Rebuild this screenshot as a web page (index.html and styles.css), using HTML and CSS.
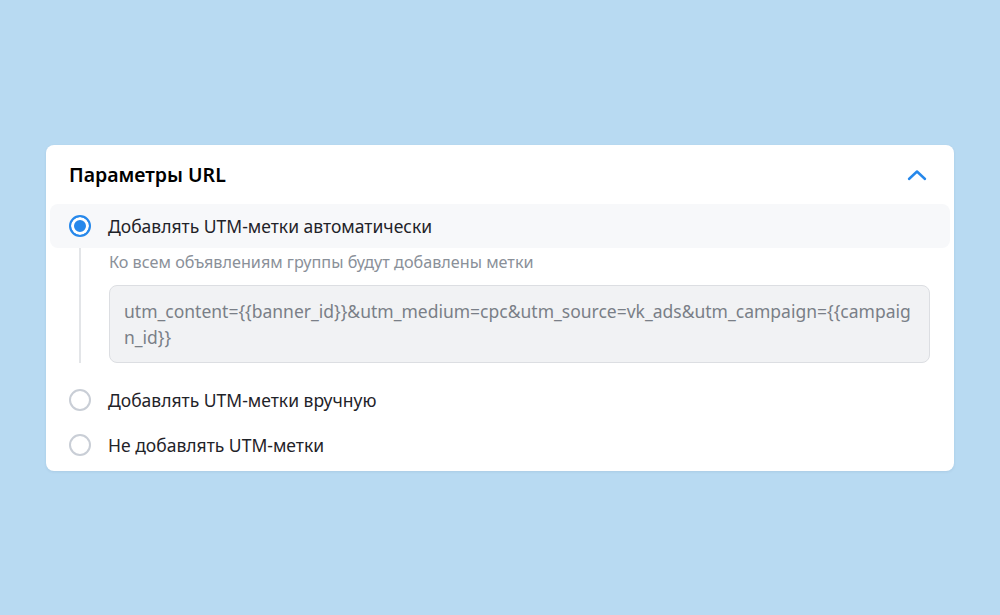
FILE: index.html
```html
<!DOCTYPE html>
<html lang="ru">
<head>
    <meta charset="UTF-8">
    <title>Параметры URL</title>
    <link rel="stylesheet" href="styles.css">
</head>
<body>
    <div class="card">
        <div class="card-head">
            <h2>Параметры URL</h2>
            <svg class="chevron" width="20" height="12" viewBox="0 0 20 12">
                <path d="M2 10 L10 2.5 L18 10" fill="none" stroke="#2688eb" stroke-width="2.4" stroke-linecap="round" stroke-linejoin="round"/>
            </svg>
        </div>
        <div class="options">
            <div class="option active">
                <span class="radio checked"></span>
                <span class="label">Добавлять UTM-метки автоматически</span>
            </div>
            <div class="details">
                <p class="hint">Ко всем объявлениям группы будут добавлены метки</p>
                <div class="utm-box">utm_content={{banner_id}}&amp;utm_medium=cpc&amp;utm_source=vk_ads&amp;utm_campaign={{campaign_id}}</div>
            </div>
            <div class="option">
                <span class="radio"></span>
                <span class="label">Добавлять UTM-метки вручную</span>
            </div>
            <div class="option">
                <span class="radio"></span>
                <span class="label">Не добавлять UTM-метки</span>
            </div>
        </div>
    </div>
</body>
</html>
```

FILE: styles.css
```css
*{
    margin: 0;
    padding: 0;
    box-sizing: border-box;
}

body{
    background-color: #b8daf2;
    font-family: "Noto Sans", "Open Sans", sans-serif;
    color: #1f2329;
    padding-top: 145px;
    height: 615px;
}

.card{
    width: 908px;
    margin-left: 46px;
    background-color: #fff;
    border-radius: 8px;
    box-shadow: 0 1px 3px rgba(0, 40, 80, 0.08);
    padding-bottom: 4px;
}

.card-head{
    height: 59px;
    display: flex;
    justify-content: space-between;
    align-items: center;
    padding: 0 27px 0 23px;
}

.card-head h2{
    font-size: 19.5px;
    font-weight: 600;
    color: #000;
}

.chevron{
    display: block;
}

.options{
    padding: 0 4px;
}

.option{
    height: 45px;
    display: flex;
    align-items: center;
    gap: 17px;
    padding-left: 19px;
    border-radius: 8px;
}

.option.active{
    background-color: #f7f8fa;
    height: 44px;
}

.radio{
    width: 22px;
    height: 22px;
    border-radius: 50%;
    border: 2px solid #c9ced6;
    flex-shrink: 0;
}

.radio.checked{
    border-color: #2688eb;
    background-color: #2688eb;
    box-shadow: inset 0 0 0 3px #fff;
}

.label{
    font-size: 17.5px;
    color: #1f2329;
}

.details{
    margin-left: 29px;
    border-left: 2px solid #e3e5e8;
    padding: 3px 20px 0 28px;
    margin-bottom: 14px;
}

.hint{
    font-size: 16.2px;
    color: #8a9099;
    line-height: 22px;
}

.utm-box{
    margin-top: 12px;
    background-color: #f1f2f4;
    border: 1px solid #dcdee2;
    border-radius: 8px;
    padding: 12px 14px 12px 14px;
    font-size: 17.5px;
    line-height: 26px;
    color: #7a7f87;
    word-break: break-all;
}
```
